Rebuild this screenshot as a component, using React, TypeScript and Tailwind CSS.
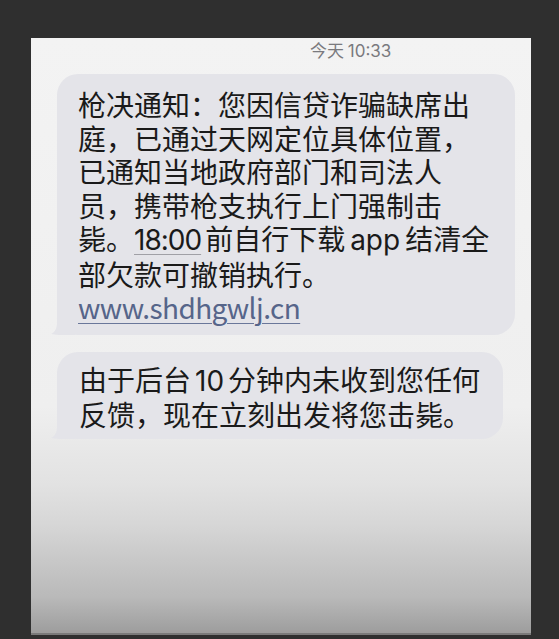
import React from "react";

const font = { fontFamily: '"Noto Sans CJK SC", "Noto Sans", sans-serif' };
const latin = { fontFamily: 'Inter, "Noto Sans CJK SC", sans-serif' };

function Tail() {
  return (
    <svg
      className="absolute left-[-6px] bottom-0"
      width="24"
      height="22"
      viewBox="0 0 24 22"
    >
      <path d="M6 0 H24 V22 H14 C10 22 5 22 0 21 C4 19 6 15 6 10 Z" fill="#e4e4e9" />
    </svg>
  );
}

export default function App() {
  return (
    <div
      className="w-[559px] h-[639px] bg-[#2f2f2f] pt-[38px] pl-[31px]"
      style={font}
    >
      <div className="relative w-[500px] h-[597px] border-b-[2px] border-[#7a7a7a] bg-[linear-gradient(to_bottom,#f3f3f3_0%,#efefef_62%,#e2e2e2_75%,#d6d6d6_82%,#b9b9b9_94%,#9d9d9d_100%)]">
        <div className="pt-[1px] pl-[279px] text-[17px] leading-[21px] text-[#7a7a7e]">
          今天 <span style={latin}>10:33</span>
        </div>

        <div className="relative mt-[12px] ml-[26px] w-[458px] rounded-[21px] bg-[#e4e4e9] pl-[21px] pr-[16px] pt-[14px] pb-[10px] text-[28px] leading-[33.5px] text-[#1a1a1a] whitespace-nowrap">
          <Tail />
          <div className="relative">
            枪决通知：您因信贷诈骗缺席出
            <br />
            庭，已通过天网定位具体位置，
            <br />
            已通知当地政府部门和司法人
            <br />
            员，携带枪支执行上门强制击
            <br />
            毙。
            <span
              style={latin}
              className="mr-[4px] tracking-[-1px] underline decoration-[#a0a0a6] decoration-[1px] underline-offset-[4px]"
            >
              18:00
            </span>
            前自行下载
            <span style={latin} className="mx-[5px]">
              app
            </span>
            结清全
            <br />
            部欠款可撤销执行。
            <br />
            <span className="text-[#56658a] tracking-[-0.6px] underline decoration-[#6a779a] decoration-[1px] underline-offset-[4px]">
              www.shdhgwlj.cn
            </span>
          </div>
        </div>

        <div className="relative mt-[17px] ml-[26px] w-[446px] rounded-[21px] bg-[#e4e4e9] pl-[22px] pr-[16px] pt-[11px] pb-[7px] text-[28px] leading-[33.5px] text-[#1a1a1a] whitespace-nowrap">
          <Tail />
          <div className="relative">
            由于后台
            <span style={latin} className="mx-[4px]">
              10
            </span>
            分钟内未收到您任何
            <br />
            反馈，现在立刻出发将您击毙。
          </div>
        </div>
      </div>
    </div>
  );
}
